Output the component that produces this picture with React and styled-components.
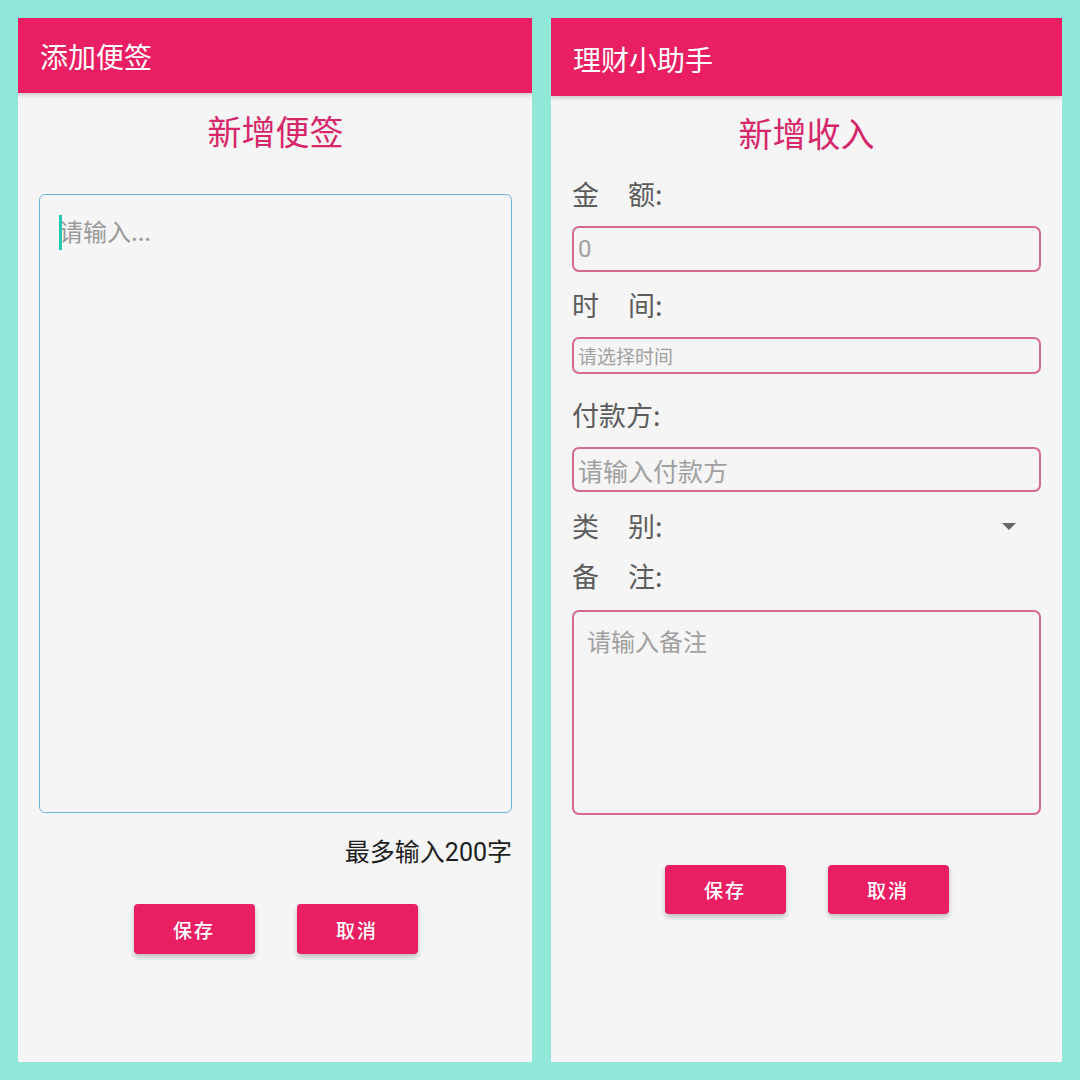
import React from "react";
import styled, { createGlobalStyle } from "styled-components";

const FONT = `"Noto Sans CJK SC", "Noto Sans", sans-serif`;
const LATIN_FIRST = `Roboto, "Noto Sans CJK SC", sans-serif`;

const GlobalStyle = createGlobalStyle`
  html, body { margin: 0; padding: 0; background: #92e8d8; }
  body { font-family: ${FONT}; }
  * { box-sizing: border-box; }
`;

const Screen = styled.div`
  width: 1080px;
  height: 1080px;
  padding: 18px;
  display: grid;
  grid-template-columns: 514px 511px;
  column-gap: 19px;
  background: #92e8d8;
`;

const Panel = styled.div`
  background: #f5f5f5;
  display: flex;
  flex-direction: column;
  overflow: hidden;
`;

const AppBar = styled.div`
  height: ${(p) => p.$h}px;
  background: #e91e63;
  color: #fff;
  font-size: 28px;
  display: flex;
  align-items: center;
  padding-left: 22px;
  padding-top: ${(p) => p.$offset || 0}px;
  box-shadow: 0 2px 4px rgba(0, 0, 0, 0.18);
  position: relative;
  z-index: 1;
  flex-shrink: 0;
`;

const Body = styled.div`
  display: flex;
  flex-direction: column;
  padding: 0 ${(p) => p.$pr || 21}px 0 21px;
`;

const PageTitle = styled.div`
  height: ${(p) => p.$h}px;
  line-height: ${(p) => p.$lh || p.$h}px;
  text-align: center;
  color: #d6276a;
  font-size: 34px;
  flex-shrink: 0;
`;

const NoteBox = styled.div`
  margin-top: 29px;
  height: 619px;
  flex-shrink: 0;
  border: 1.5px solid #6db5d9;
  border-radius: 6px;
  padding: 18px 19px;
  position: relative;
`;

const Caret = styled.span`
  position: absolute;
  left: 19px;
  top: 20px;
  width: 3px;
  height: 35px;
  background: #25c9b3;
`;

const NotePlaceholder = styled.span`
  font-size: 24px;
  line-height: 36px;
  color: #9a9a9a;
`;

const Counter = styled.div`
  margin-top: 25px;
  height: 30px;
  line-height: 30px;
  text-align: right;
  font-family: ${LATIN_FIRST};
  font-size: 25px;
  color: #1e1e1e;
`;

const ButtonRow = styled.div`
  margin-top: ${(p) => p.$mt}px;
  display: flex;
  justify-content: center;
  gap: 42px;
`;

const Button = styled.button`
  width: 121px;
  height: ${(p) => p.$h}px;
  border: none;
  border-radius: 4px;
  background: #e91e63;
  color: #fff;
  font-family: ${FONT};
  font-size: 19px;
  font-weight: 500;
  letter-spacing: 2px;
  box-shadow: 0 3px 5px rgba(0, 0, 0, 0.22);
  padding: 0;
`;

const Label = styled.div`
  margin-top: ${(p) => p.$mt}px;
  height: 40px;
  line-height: 40px;
  font-size: 27px;
  color: #5c5c5c;
  display: flex;
  align-items: center;
  justify-content: space-between;
  flex-shrink: 0;
`;

const Gap = styled.span`
  display: inline-block;
  width: 29px;
`;

const Field = styled.div`
  margin-top: 12px;
  height: ${(p) => p.$h}px;
  flex-shrink: 0;
  border: 2px solid #d66a8d;
  border-radius: 7px;
  padding: 0 4px;
  display: flex;
  align-items: center;
  font-family: ${(p) => (p.$latin ? LATIN_FIRST : FONT)};
  font-size: ${(p) => p.$fs}px;
  color: #a0a0a0;
`;

const MemoBox = styled.div`
  margin-top: 14px;
  height: 205px;
  flex-shrink: 0;
  border: 2px solid #d66a8d;
  border-radius: 7px;
  padding: 12px 13px;
  font-size: 24px;
  line-height: 34px;
  color: #a0a0a0;
`;

const DropArrow = styled.span`
  width: 0;
  height: 0;
  margin-right: 25px;
  border-left: 7px solid transparent;
  border-right: 7px solid transparent;
  border-top: 7px solid #666;
`;

export default function App() {
  return (
    <>
      <GlobalStyle />
      <Screen>
        <Panel>
          <AppBar $h={75}>添加便签</AppBar>
          <Body $pr={20}>
            <PageTitle $h={72} $lh={75}>新增便签</PageTitle>
            <NoteBox>
              <Caret />
              <NotePlaceholder>请输入...</NotePlaceholder>
            </NoteBox>
            <Counter>最多输入200字</Counter>
            <ButtonRow $mt={36}>
              <Button $h={50}>保存</Button>
              <Button $h={50}>取消</Button>
            </ButtonRow>
          </Body>
        </Panel>
        <Panel>
          <AppBar $h={78} $offset={3}>理财小助手</AppBar>
          <Body>
            <PageTitle $h={74}>新增收入</PageTitle>
            <Label $mt={4}>
              <span>金<Gap />额:</span>
            </Label>
            <Field $h={46} $fs={24} $latin>0</Field>
            <Label $mt={13}>
              <span>时<Gap />间:</span>
            </Label>
            <Field $h={37} $fs={19}>请选择时间</Field>
            <Label $mt={21}>
              <span>付款方:</span>
            </Label>
            <Field $h={45} $fs={25}>请输入付款方</Field>
            <Label $mt={14}>
              <span>类<Gap />别:</span>
              <DropArrow />
            </Label>
            <Label $mt={10}>
              <span>备<Gap />注:</span>
            </Label>
            <MemoBox>请输入备注</MemoBox>
            <ButtonRow $mt={50}>
              <Button $h={49}>保存</Button>
              <Button $h={49}>取消</Button>
            </ButtonRow>
          </Body>
        </Panel>
      </Screen>
    </>
  );
}
